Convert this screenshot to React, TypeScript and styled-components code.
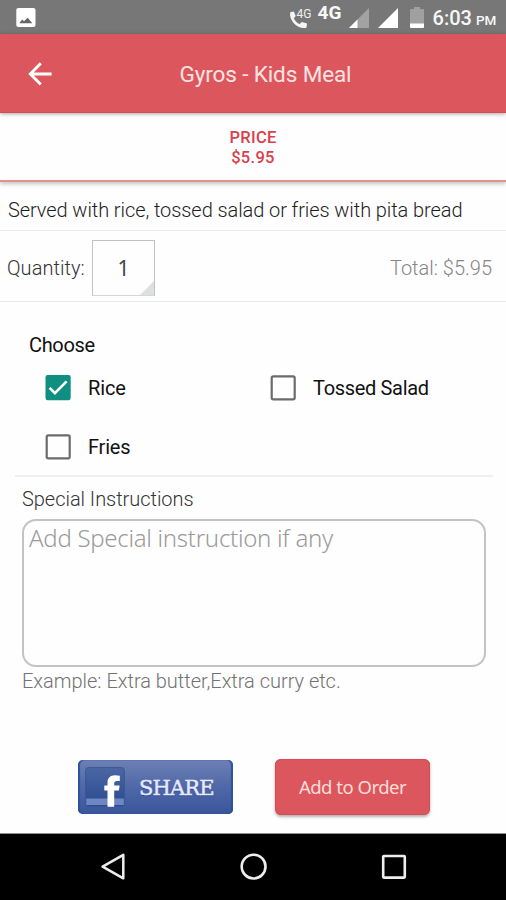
import React, { useState } from 'react';
import styled, { createGlobalStyle } from 'styled-components';

const GlobalStyle = createGlobalStyle`
  *, *::before, *::after { box-sizing: border-box; }
  html, body { margin: 0; padding: 0; background: #fefefe; }
  body { font-family: Roboto, sans-serif; overflow: hidden; }
  button { border: 0; padding: 0; background: none; font: inherit; color: inherit; }
`;

const Screen = styled.div`
  display: flex;
  flex-direction: column;
  width: 506px;
  height: 900px;
  background: #fefefe;
`;

const StatusBar = styled.header`
  display: flex;
  flex: none;
  justify-content: space-between;
  height: 34px;
  padding: 0 10px 0 16px;
  background: #777777;
  color: #f7f7f7;
`;

const StatusIcons = styled.div`
  display: flex;
  align-items: flex-start;
`;

const PhotoIcon = styled.svg`
  display: block;
  margin-top: 8px;
`;

const CallIcon = styled.svg`
  margin: 7px 6px 0 0;
`;

const NetworkType = styled.span`
  width: 24px;
  margin-right: 7px;
  font-size: 19px;
  font-weight: 700;
  line-height: 26px;
  letter-spacing: -0.1px;
`;

const SignalIcon = styled.svg`
  margin: 8px 9.5px 0 0;
`;

const BatteryIcon = styled.svg`
  margin: 7px 9px 0 2px;
`;

const Clock = styled.span`
  font-size: 20px;
  font-weight: 500;
  line-height: 37px;
  white-space: pre;
`;

const Meridiem = styled.small`
  margin-left: 4px;
  font-size: 13.5px;
  letter-spacing: -0.2px;
`;

const AppBar = styled.div`
  display: grid;
  flex: none;
  grid-template-columns: 77px 1fr 53px;
  align-items: center;
  height: 79px;
  padding-top: 2px;
  background: #dc575d;
  border-bottom: 1px solid #d94a52;
  color: #ffe3e2;
  z-index: 1;
  box-shadow: 0 1px 4px rgba(0, 0, 0, 0.35);
`;

const BackButton = styled.button`
  display: flex;
  padding-left: 28px;
  color: #fff;
`;

const Title = styled.h1`
  margin: 0;
  padding: 0 0 1px 1px;
  font-size: 22.5px;
  font-weight: 400;
  line-height: 28px;
  letter-spacing: -0.12px;
  text-align: center;
`;

const PricePanel = styled.section`
  display: flex;
  flex: none;
  flex-direction: column;
  justify-content: center;
  height: 69px;
  padding-top: 2px;
  border-bottom: 2px solid #e0928f;
  box-shadow: 0 2px 4px rgba(60, 60, 80, 0.3);
  color: #d8404b;
  font-size: 16.5px;
  font-weight: 500;
  line-height: 20px;
  letter-spacing: 0.3px;
  text-align: center;
`;

const Description = styled.p`
  flex: none;
  margin: 0;
  height: 49px;
  padding: 4px 8px 0;
  border-bottom: 1px solid #e9e9e9;
  color: #1d1d1d;
  font-size: 20px;
  font-weight: 300;
  line-height: 48px;
  letter-spacing: -0.08px;
`;

const QuantityRow = styled.section`
  display: flex;
  flex: none;
  align-items: center;
  height: 71px;
  padding: 3px 14px 0 7px;
  border-bottom: 1px solid #e9e9e9;
  font-size: 20px;
  font-weight: 300;
  color: #333;
`;

const QuantityLabel = styled.span`
  width: 85px;
  letter-spacing: 0.05px;
`;

const QuantityBox = styled.button`
  display: flex;
  align-items: flex-end;
  justify-content: flex-end;
  width: 63px;
  height: 56px;
  border: 1px solid #c2c2c2;
  border-bottom-color: #d6d6d6;
`;

const QuantityValue = styled.span`
  flex: 1;
  align-self: center;
  padding-left: 14px;
  font: 400 21px/28px "Noto Sans", sans-serif;
  color: #454545;
  text-align: center;
`;

const Total = styled.span`
  margin-left: auto;
  color: #858585;
`;

const Options = styled.fieldset`
  flex: none;
  height: 175px;
  margin: 0 13px 0 15px;
  padding: 31px 0 0 14px;
  border: 0;
  border-bottom: 2px solid #f0f0f0;
`;

const GroupTitle = styled.div`
  height: 25px;
  color: #111;
  font-size: 20px;
  line-height: 24px;
  letter-spacing: -0.35px;
`;

const OptionGrid = styled.div`
  display: grid;
  grid-template-columns: 225px 1fr;
  grid-auto-rows: 59px;
  margin-left: 16px;
`;

const Option = styled.label<{ $spacing: number }>`
  display: flex;
  align-items: center;
  gap: 17px;
  color: #111;
  font-size: 20px;
  letter-spacing: ${(p) => p.$spacing}px;
`;

const HiddenInput = styled.input`
  display: none;
`;

const Instructions = styled.section`
  display: flex;
  flex: none;
  flex-direction: column;
  padding: 10px 20px 0 22px;
`;

const InstructionLabel = styled.label`
  height: 32px;
  color: #333;
  font-size: 20px;
  font-weight: 300;
  line-height: 24px;
  letter-spacing: -0.04px;
`;

const NoteField = styled.textarea`
  display: block;
  width: 464px;
  height: 148px;
  padding: 1px 5px;
  border: 2px solid #c3c3c3;
  border-radius: 14px;
  outline: 0;
  resize: none;
  background: transparent;
  color: #333;
  font: 300 24px/32px "Noto Sans", sans-serif;
  letter-spacing: -0.29px;

  &::placeholder {
    color: #9b9b9b;
    opacity: 1;
  }
`;

const Hint = styled.p`
  margin: 2px 0 0;
  color: #727272;
  font-size: 20px;
  font-weight: 300;
  line-height: 24px;
  letter-spacing: -0.02px;
`;

const Actions = styled.div`
  display: flex;
  flex: 1;
  align-items: flex-start;
  gap: 42px;
  padding: 67px 0 0 78px;
`;

const ShareButton = styled.button`
  display: flex;
  align-items: center;
  width: 155px;
  height: 54px;
  padding-left: 7px;
  border-radius: 5px;
  background: linear-gradient(#6d80b4, #5068a8 50%, #39559b);
  box-shadow: inset 2px 0 1px #2d539c, inset -2px 0 1px #2d539c, inset 0 -1px 1px #3d5596;
  color: #e5eafc;
`;

const ShareText = styled.span`
  margin: 1px 0 0 14px;
  font: 400 21px/28px "DejaVu Serif", serif;
  letter-spacing: -0.85px;
  -webkit-text-stroke: 0.5px #e5eafc;
  text-shadow: 0 1px 1px #263f7c;
`;

const OrderButton = styled.button`
  width: 155px;
  height: 56px;
  margin-top: -1px;
  border-radius: 6px;
  background: #dc575d;
  box-shadow: inset 0 0 0 1px #d84b53, 0 2px 3px rgba(0, 0, 0, 0.3);
  color: #ffdcda;
  font: 400 18.5px/54px "Noto Sans", sans-serif;
  letter-spacing: -0.5px;
  text-align: center;
`;

const NavBar = styled.nav`
  display: flex;
  flex: none;
  justify-content: space-between;
  align-items: center;
  height: 67px;
  padding: 0 99px 0 100px;
  border-top: 1px solid #8d8d8d;
  background: #000;
`;

const NavButton = styled.button`
  display: flex;
`;

function CheckMark({ checked }: { checked: boolean }) {
  return (
    <svg width="26" height="26" viewBox="0 0 26 26">
      {checked ? (
        <>
          <rect x="0.5" y="0" width="25.2" height="25.2" rx="2.2" fill="#0f8f80" />
          <path d="M4.6 12.9 9.9 18.1 21.6 6.4" fill="none" stroke="#fff" strokeWidth="2.7" />
        </>
      ) : (
        <rect x="1.7" y="1.3" width="23" height="23" rx="1.6" fill="none" stroke="#6b6b6b" strokeWidth="2.2" />
      )}
    </svg>
  );
}

const CHOICES = [
  { name: 'Rice', spacing: -0.1 },
  { name: 'Tossed Salad', spacing: -0.33 },
  { name: 'Fries', spacing: -0.2 },
];

export default function App() {
  const [chosen, setChosen] = useState<string[]>(['Rice']);
  const toggle = (name: string) =>
    setChosen((now) => (now.includes(name) ? now.filter((n) => n !== name) : [...now, name]));

  return (
    <Screen>
      <GlobalStyle />
      <StatusBar>
        <PhotoIcon width="20" height="20" viewBox="0 0 20 20">
          <rect x="0.3" y="0" width="19.2" height="19" rx="2" fill="#fff" />
          <path d="M3.3 15.2 6.2 11.6 8 13.3 11.7 9.8 16.3 15.2Z" fill="#666" />
        </PhotoIcon>
        <StatusIcons>
          <CallIcon width="23" height="23" viewBox="0 0 23 23">
            <path
              d="M1.2 5.2 4.8 4.5 6.7 9.1 4.8 11.2C6 14 8 16 10.8 17.1L12.8 15 18 16.4 17.5 20.4C15.6 21.6 9.1 21.3 5 16.5 2 13 .6 9 1.2 5.2Z"
              fill="#f5f5f5"
            />
            <text x="7.6" y="10.8" fontFamily="Roboto" fontSize="12" fill="#f0f0f0">4G</text>
          </CallIcon>
          <NetworkType>4G</NetworkType>
          <SignalIcon width="20" height="20" viewBox="0 0 20 20">
            <path d="M0 20 20 0V20Z" fill="#a3a3a3" />
            <path d="M0 20 8.5 11.5V20Z" fill="#fff" />
          </SignalIcon>
          <SignalIcon width="20" height="20" viewBox="0 0 20 20">
            <path d="M0 20 20 0V20Z" fill="#fff" />
          </SignalIcon>
          <BatteryIcon width="14" height="21" viewBox="0 0 14 21">
            <path d="M1 2H4V0H10V2H13Q14 2 14 3V20Q14 21 13 21H1Q0 21 0 20V3Q0 2 1 2Z" fill="#a0a0a0" />
            <path d="M0 16.5H14V20Q14 21 13 21H1Q0 21 0 20Z" fill="#fff" />
          </BatteryIcon>
          <Clock>6:03<Meridiem>PM</Meridiem></Clock>
        </StatusIcons>
      </StatusBar>

      <AppBar>
        <BackButton aria-label="Back">
          <svg width="24" height="24" viewBox="0 0 24 24" fill="none" stroke="currentColor" strokeWidth="2.9">
            <path d="M12.8 1.2 2.3 12 12.8 22.6M2.6 12H23.6" />
          </svg>
        </BackButton>
        <Title>Gyros - Kids Meal</Title>
      </AppBar>

      <PricePanel>
        <span>PRICE</span>
        <span>$5.95</span>
      </PricePanel>

      <Description>Served with rice, tossed salad or fries with pita bread</Description>

      <QuantityRow>
        <QuantityLabel>Quantity:</QuantityLabel>
        <QuantityBox>
          <QuantityValue>1</QuantityValue>
          <svg width="14" height="14" viewBox="0 0 14 14">
            <path d="M0 14 14 0V14Z" fill="#dde0df" />
          </svg>
        </QuantityBox>
        <Total>Total: $5.95</Total>
      </QuantityRow>

      <Options>
        <GroupTitle>Choose</GroupTitle>
        <OptionGrid>
          {CHOICES.map((c) => (
            <Option key={c.name} $spacing={c.spacing}>
              <HiddenInput type="checkbox" checked={chosen.includes(c.name)} onChange={() => toggle(c.name)} />
              <CheckMark checked={chosen.includes(c.name)} />
              {c.name}
            </Option>
          ))}
        </OptionGrid>
      </Options>

      <Instructions>
        <InstructionLabel htmlFor="note">Special Instructions</InstructionLabel>
        <NoteField id="note" placeholder="Add Special instruction if any" />
        <Hint>Example: Extra butter,Extra curry etc.</Hint>
      </Instructions>

      <Actions>
        <ShareButton>
          <svg width="40" height="42" viewBox="0 0 40 42">
            <defs>
              <linearGradient id="tile" x1="0" y1="0" x2="0" y2="1">
                <stop offset="0" stopColor="#4b66a3" />
                <stop offset="1" stopColor="#294b8f" />
              </linearGradient>
            </defs>
            <rect x="0.6" y="1.6" width="38.8" height="38.8" rx="3" fill="url(#tile)" stroke="#3a5796" />
            <path d="M1.2 32.5H38.8V39H1.2Z" fill="#6e87c2" />
            <path
              d="M22.5 40.8V24.6H19.3V19.6H22.5V16.4C22.5 12 25.4 9.2 30 9.2 32 9.2 33.6 9.4 34.8 9.7V15H32C29.8 15 29.2 15.9 29.2 17.6V19.6H34.6L33.9 24.6H29.2V40.8Z"
              fill="#fff"
            />
          </svg>
          <ShareText>SHARE</ShareText>
        </ShareButton>
        <OrderButton>Add to Order</OrderButton>
      </Actions>

      <NavBar>
        <NavButton aria-label="Back">
          <svg width="26" height="30" viewBox="0 0 26 30" fill="none" stroke="#eee" strokeWidth="2.5" strokeLinejoin="round">
            <path d="M2.6 14.6 23.3 2.9V26.3Z" />
          </svg>
        </NavButton>
        <NavButton aria-label="Home">
          <svg width="28" height="28" viewBox="0 0 28 28" fill="none" stroke="#eee" strokeWidth="2.6">
            <circle cx="13.6" cy="13.6" r="11.9" />
          </svg>
        </NavButton>
        <NavButton aria-label="Recents">
          <svg width="26" height="26" viewBox="0 0 26 26" fill="none" stroke="#eee" strokeWidth="2.6" strokeLinejoin="round">
            <rect x="2.2" y="2" width="21.6" height="21.6" rx="0.8" />
          </svg>
        </NavButton>
      </NavBar>
    </Screen>
  );
}
